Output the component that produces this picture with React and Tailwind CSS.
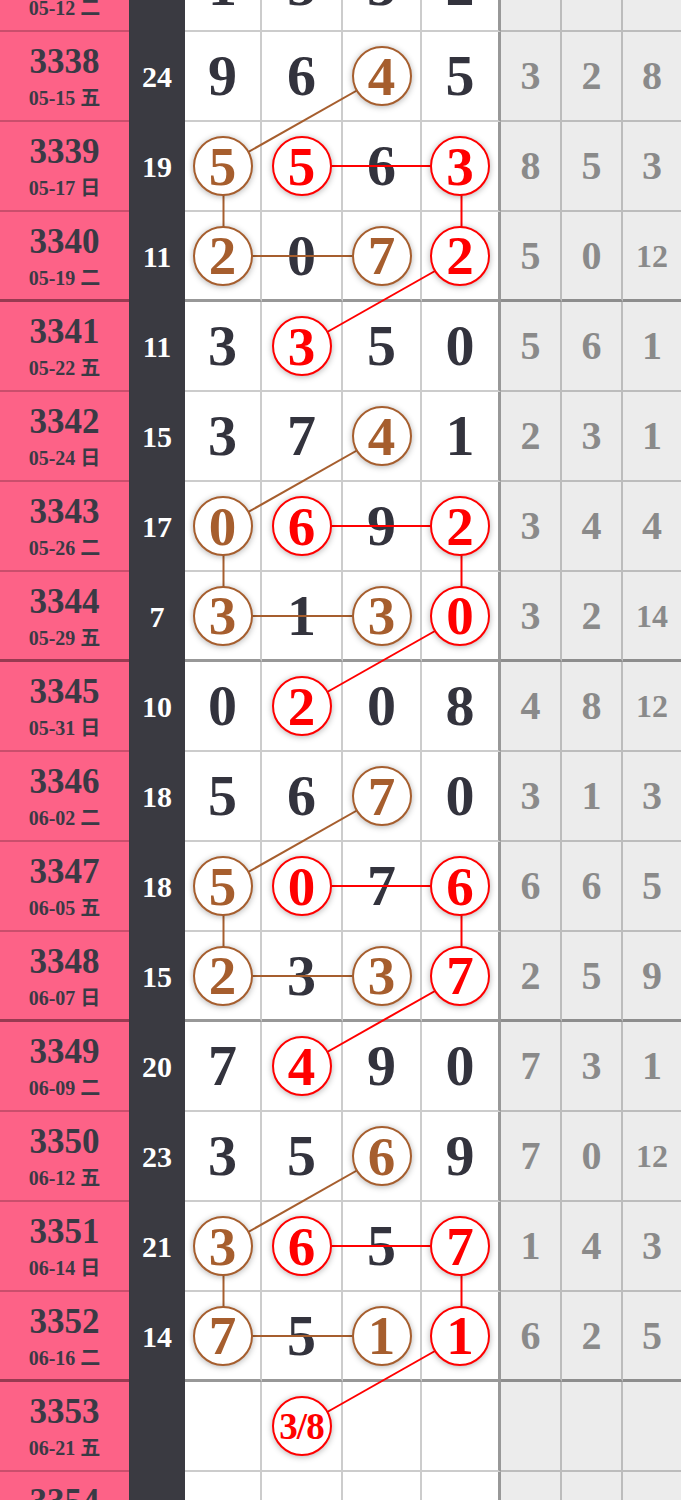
import React from 'react';

// draw history rows; marks: b = brown ring, r = red ring
const rows = [
    { no: '3337', date: '05-12 二', sum: 11, d: [1, 5, 3, 2], g: [2, 3, 11] },
    { no: '3338', date: '05-15 五', sum: 24, d: [9, 6, 4, 5], g: [3, 2, 8] },
    { no: '3339', date: '05-17 日', sum: 19, d: [5, 5, 6, 3], g: [8, 5, 3] },
    { no: '3340', date: '05-19 二', sum: 11, d: [2, 0, 7, 2], g: [5, 0, 12] },
    { no: '3341', date: '05-22 五', sum: 11, d: [3, 3, 5, 0], g: [5, 6, 1] },
    { no: '3342', date: '05-24 日', sum: 15, d: [3, 7, 4, 1], g: [2, 3, 1] },
    { no: '3343', date: '05-26 二', sum: 17, d: [0, 6, 9, 2], g: [3, 4, 4] },
    { no: '3344', date: '05-29 五', sum: 7, d: [3, 1, 3, 0], g: [3, 2, 14] },
    { no: '3345', date: '05-31 日', sum: 10, d: [0, 2, 0, 8], g: [4, 8, 12] },
    { no: '3346', date: '06-02 二', sum: 18, d: [5, 6, 7, 0], g: [3, 1, 3] },
    { no: '3347', date: '06-05 五', sum: 18, d: [5, 0, 7, 6], g: [6, 6, 5] },
    { no: '3348', date: '06-07 日', sum: 15, d: [2, 3, 3, 7], g: [2, 5, 9] },
    { no: '3349', date: '06-09 二', sum: 20, d: [7, 4, 9, 0], g: [7, 3, 1] },
    { no: '3350', date: '06-12 五', sum: 23, d: [3, 5, 6, 9], g: [7, 0, 12] },
    { no: '3351', date: '06-14 日', sum: 21, d: [3, 6, 5, 7], g: [1, 4, 3] },
    { no: '3352', date: '06-16 二', sum: 14, d: [7, 5, 1, 1], g: [6, 2, 5] },
    { no: '3353', date: '06-21 五', sum: '', d: ['', '3/8', '', ''], g: ['', '', ''] },
    { no: '3354', date: '06-23 二', sum: '', d: ['', '', '', ''], g: ['', '', ''] },
];

const ROW_H = 90;
const groupStarts = [1, 5, 9, 13];
const colX = [223.5, 302.5, 382.5, 461.5];
const cellW = ['w-[77px]', 'w-[81px]', 'w-[79px]', 'w-[79px]'];

// ring marks for each row / column
const marks = {};
const setMark = (r, c, m) => { marks[`${r}-${c}`] = m; };
groupStarts.forEach((i) => {
    setMark(i, 2, 'b');
    setMark(i + 1, 0, 'b'); setMark(i + 1, 1, 'r'); setMark(i + 1, 3, 'r');
    setMark(i + 2, 0, 'b'); setMark(i + 2, 2, 'b'); setMark(i + 2, 3, 'r');
    setMark(i + 3, 1, 'r');
});

// connector lines [row, col, row, col, color]
const links = [];
groupStarts.forEach((i) => {
    links.push([i, 2, i + 1, 0, 'b'], [i + 1, 0, i + 2, 0, 'b'], [i + 2, 0, i + 2, 2, 'b']);
    links.push([i + 1, 1, i + 1, 3, 'r'], [i + 1, 3, i + 2, 3, 'r'], [i + 2, 3, i + 3, 1, 'r']);
});

const Ring = ({ value, color }) => (
    <div
        className={`relative z-20 w-[60px] h-[60px] rounded-full bg-white border-[2.5px] flex items-center justify-center shadow-[0_1px_6px_rgba(0,0,0,0.3)] ${color === 'r' ? 'border-[#ff0000] text-[#ff0000]' : 'border-[#a65e2e] text-[#a65e2e]'
            }`}
    >
        <span className={`leading-none font-bold ${String(value).length > 1 ? 'text-[37px] tracking-[-1px]' : 'text-[55px]'}`}>
            {value}
        </span>
    </div>
);

const Row = ({ row, index }) => {
    const thick = index % 4 === 3;
    const line = thick ? 'border-b-[3px] border-b-black/40' : 'border-b-2 border-b-black/20';
    return (
        <div className="flex h-[90px]">
            {/* Issue & Date */}
            <div className={`w-[129px] shrink-0 bg-[#fd6287] flex flex-col items-center justify-center text-[#3a3a45] ${line}`}>
                <span className="text-[35px] leading-none font-bold">{row.no}</span>
                <span className="text-[20px] leading-none font-bold mt-[9px]">{row.date}</span>
            </div>

            {/* Sum */}
            <div className="w-[56px] shrink-0 bg-[#3a3a41] flex items-center justify-center text-white text-[30px] leading-none font-bold">
                {row.sum}
            </div>

            {/* Main digits */}
            {row.d.map((v, c) => {
                const m = marks[`${index}-${c}`];
                return (
                    <div
                        key={c}
                        className={`${cellW[c]} shrink-0 bg-white flex items-center justify-center ${line} ${c === 3 ? 'border-r-[3px] border-r-black/40' : 'border-r-2 border-r-black/20'
                            }`}
                    >
                        {m && v !== '' ? (
                            <Ring value={v} color={m} />
                        ) : (
                            <span className="text-[58px] leading-none font-bold text-[#33333d]">{v}</span>
                        )}
                    </div>
                );
            })}

            {/* Side stats */}
            {row.g.map((v, c) => (
                <div
                    key={c}
                    className={`${c === 2 ? 'flex-1' : 'w-[61px] border-r-2 border-r-black/20'} ${line} shrink-0 bg-[#ececec] flex items-center justify-center text-[#8a8a8a] font-bold leading-none ${String(v).length > 1 ? 'text-[32px]' : 'text-[40px]'
                        }`}
                >
                    {v}
                </div>
            ))}
        </div>
    );
};

export default function App() {
    return (
        <div className="w-[681px] h-[1500px] overflow-hidden bg-white font-['Liberation_Serif','Noto_Sans_CJK_SC',serif]">
            <div className="relative -mt-[58px]">
                {rows.map((row, i) => (
                    <Row key={row.no} row={row} index={i} />
                ))}

                {/* Connector lines */}
                <svg
                    className="absolute left-0 top-0 z-10 pointer-events-none"
                    width="681"
                    height={rows.length * ROW_H}
                >
                    {links.map(([r1, c1, r2, c2, col], k) => (
                        <line
                            key={k}
                            x1={colX[c1]}
                            y1={r1 * ROW_H + 44}
                            x2={colX[c2]}
                            y2={r2 * ROW_H + 44}
                            stroke={col === 'r' ? '#ff0000' : '#a65e2e'}
                            strokeWidth="2"
                        />
                    ))}
                </svg>
            </div>
        </div>
    );
}
